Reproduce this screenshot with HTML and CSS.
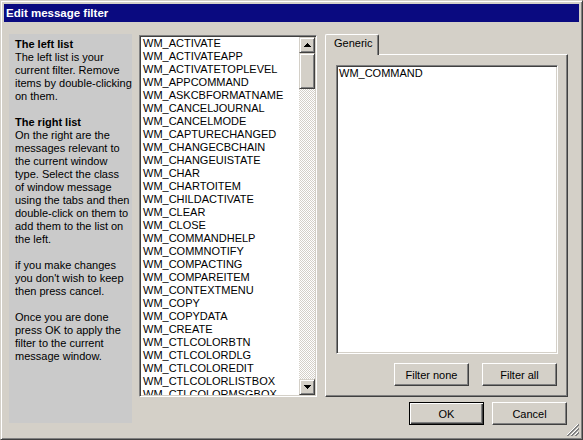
FILE: index.html
```html
<!DOCTYPE html>
<html>
<head>
<meta charset="utf-8">
<title>Edit message filter</title>
<link rel="stylesheet" href="styles.css">
</head>
<body>
<div class="window">
  <div class="titlebar">Edit message filter</div>
  <div class="client">
    <div class="help">
      <p><b>The left list</b><br>The left list is your<br>current filter. Remove<br>items by double-clicking<br>on them.</p>
      <p><b>The right list</b><br>On the right are the<br>messages relevant to<br>the current window<br>type. Select the class<br>of window message<br>using the tabs and then<br>double-click on them to<br>add them to the list on<br>the left.</p>
      <p>if you make changes<br>you don't wish to keep<br>then press cancel.</p>
      <p>Once you are done<br>press OK to apply the<br>filter to the current<br>message window.</p>
    </div>

    <div class="listbox msglist">
      <ul class="items">
        <li>WM_ACTIVATE</li>
        <li>WM_ACTIVATEAPP</li>
        <li>WM_ACTIVATETOPLEVEL</li>
        <li>WM_APPCOMMAND</li>
        <li>WM_ASKCBFORMATNAME</li>
        <li>WM_CANCELJOURNAL</li>
        <li>WM_CANCELMODE</li>
        <li>WM_CAPTURECHANGED</li>
        <li>WM_CHANGECBCHAIN</li>
        <li>WM_CHANGEUISTATE</li>
        <li>WM_CHAR</li>
        <li>WM_CHARTOITEM</li>
        <li>WM_CHILDACTIVATE</li>
        <li>WM_CLEAR</li>
        <li>WM_CLOSE</li>
        <li>WM_COMMANDHELP</li>
        <li>WM_COMMNOTIFY</li>
        <li>WM_COMPACTING</li>
        <li>WM_COMPAREITEM</li>
        <li>WM_CONTEXTMENU</li>
        <li>WM_COPY</li>
        <li>WM_COPYDATA</li>
        <li>WM_CREATE</li>
        <li>WM_CTLCOLORBTN</li>
        <li>WM_CTLCOLORDLG</li>
        <li>WM_CTLCOLOREDIT</li>
        <li>WM_CTLCOLORLISTBOX</li>
        <li>WM_CTLCOLORMSGBOX</li>
      </ul>
      <div class="scrollbar">
        <div class="sbtn"><svg width="7" height="4" viewBox="0 0 7 4"><path d="M3 0h1v1h1v1h1v1h1v1H0V3h1V2h1V1h1z" fill="#000"/></svg></div>
        <div class="thumb"></div>
        <div class="track"></div>
        <div class="sbtn"><svg width="7" height="4" viewBox="0 0 7 4"><path d="M0 0h7v1H6v1H5v1H4v1H3V3H2V2H1V1H0z" fill="#000"/></svg></div>
      </div>
    </div>

    <div class="tabs">
      <div class="tabstrip"><div class="tab">Generic</div></div>
      <div class="pane">
        <div class="listbox filterlist">
          <ul class="items">
            <li>WM_COMMAND</li>
          </ul>
        </div>
        <div class="btnrow">
          <button class="btn">Filter none</button>
          <button class="btn">Filter all</button>
        </div>
      </div>
    </div>

    <div class="dlgbtns">
      <button class="btn default">OK</button>
      <button class="btn">Cancel</button>
    </div>
  </div>
  <svg class="grip" width="12" height="12" viewBox="0 0 12 12" shape-rendering="crispEdges">
    <path d="M11 0L0 11" stroke="#fff"/>
    <path d="M12 0L0 12M12 1L1 12" stroke="#808080"/>
    <path d="M11 4L4 11" stroke="#fff"/>
    <path d="M12 4L4 12M12 5L5 12" stroke="#808080"/>
    <path d="M11 8L8 11" stroke="#fff"/>
    <path d="M12 8L8 12M12 9L9 12" stroke="#808080"/>
  </svg>
</div>
</body>
</html>
```

FILE: styles.css
```css
* { box-sizing: border-box; }

html, body {
  margin: 0;
  padding: 0;
  background: #d4d0c8;
}

body {
  font-family: "Liberation Sans", Arial, sans-serif;
  font-size: 11px;
  line-height: 13px;
  color: #000;
}

.window {
  position: relative;
  width: 583px;
  height: 440px;
  background: #d4d0c8;
  border: 1px solid;
  border-color: #d4d0c8 #404040 #404040 #d4d0c8;
  box-shadow: inset 1px 1px #fff, inset -1px -1px #808080;
  padding: 3px;
  display: flex;
  flex-direction: column;
}

.titlebar {
  height: 18px;
  background: #0a0a80;
  color: #fff;
  font-weight: bold;
  font-size: 11.5px;
  line-height: 18px;
  padding-left: 2px;
  white-space: nowrap;
}

.client {
  display: grid;
  grid-template-columns: 123px 178px 244px;
  grid-template-rows: 363px auto;
  column-gap: 7px;
  padding: 12px 0 0 5px;
  align-items: start;
}

/* left help panel */
.help {
  grid-row: 1 / span 2;
  grid-column: 1;
  height: 389px;
  background: #cacaca;
  padding: 4px 0 0 6px;
  white-space: nowrap;
  overflow: hidden;
}

.help p {
  margin: 0 0 13px;
}

/* sunken list boxes */
.listbox {
  background: #fff;
  border: 1px solid;
  border-color: #808080 #fff #fff #808080;
  box-shadow: inset 1px 1px #404040, inset -1px -1px #d4d0c8;
  padding: 1px;
  display: flex;
  overflow: hidden;
}

.items {
  list-style: none;
  margin: 0;
  padding: 0 0 0 2px;
  flex: 1;
  overflow: hidden;
  white-space: nowrap;
}

.items li {
  height: 13px;
  line-height: 13px;
}

.msglist {
  grid-row: 1;
  grid-column: 2;
  margin-top: 1px;
  height: 362px;
}

/* scrollbar */
.scrollbar {
  width: 16px;
  flex: none;
  display: flex;
  flex-direction: column;
}

.sbtn, .thumb {
  background: #d4d0c8;
  border: 1px solid;
  border-color: #d4d0c8 #404040 #404040 #d4d0c8;
  box-shadow: inset 1px 1px #fff, inset -1px -1px #808080;
}

.sbtn {
  height: 16px;
  flex: none;
  display: flex;
  align-items: center;
  justify-content: center;
}

.sbtn svg { display: block; }

.thumb {
  height: 36px;
  flex: none;
}

.track {
  flex: 1;
  background: repeating-conic-gradient(#fff 0 25%, #d4d0c8 0 50%) 0 0 / 2px 2px;
}

/* tab control */
.tabs {
  grid-row: 1;
  grid-column: 3;
  margin-left: 1px;
  display: flex;
  flex-direction: column;
}

.tabstrip {
  display: flex;
  height: 20px;
}

.tab {
  position: relative;
  z-index: 1;
  width: 54px;
  height: 21px;
  background: #d4d0c8;
  border-top: 1px solid #fff;
  border-left: 1px solid #fff;
  border-right: 1px solid #404040;
  border-radius: 2px 2px 0 0;
  box-shadow: inset -1px 0 #808080;
  padding: 2px 0 0 8px;
  white-space: nowrap;
}

.pane {
  height: 343px;
  border: 1px solid;
  border-color: #fff #404040 #404040 #fff;
  box-shadow: inset -1px -1px #808080;
  padding: 10px;
  display: flex;
  flex-direction: column;
}

.filterlist {
  width: 222px;
  height: 294px;
}

.filterlist .items {
  padding-left: 1px;
}

.btnrow {
  display: flex;
  justify-content: flex-end;
  gap: 13px;
  margin-top: 9px;
}

/* push buttons */
.btn {
  width: 75px;
  height: 23px;
  margin: 0;
  padding: 0;
  font-family: "Liberation Sans", Arial, sans-serif;
  font-size: 11px;
  color: #000;
  background: #d4d0c8;
  border: 1px solid;
  border-color: #fff #404040 #404040 #fff;
  box-shadow: inset -1px -1px #808080;
  border-radius: 0;
}

.btn.default {
  border-color: #000;
  box-shadow: inset 1px 1px #fff, inset -1px -1px #404040, inset -2px -2px #808080;
}

.dlgbtns {
  grid-row: 2;
  grid-column: 3;
  margin: 5px 1px 0 0;
  display: flex;
  justify-content: flex-end;
  gap: 8px;
}

.grip {
  position: absolute;
  right: 3px;
  bottom: 3px;
}
```
